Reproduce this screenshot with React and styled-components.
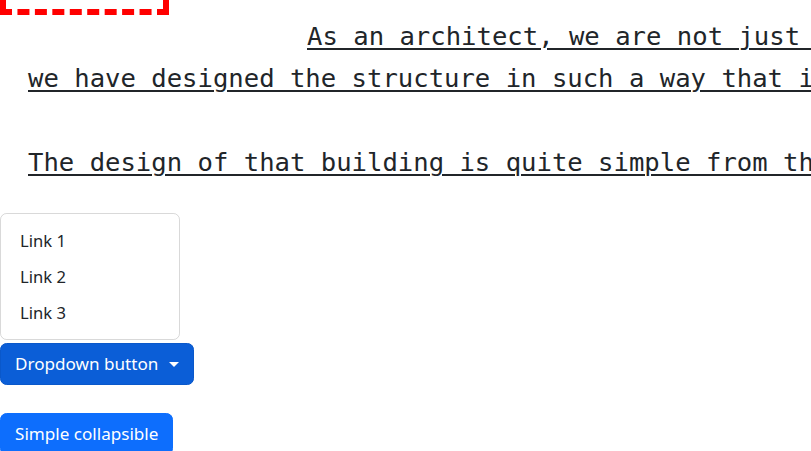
import React from "react";
import styled, { createGlobalStyle } from "styled-components";

const GlobalStyle = createGlobalStyle`
  html, body {
    margin: 0;
    padding: 0;
    background: #fff;
    overflow: hidden;
  }
  body {
    font-family: "Noto Sans", "Open Sans", sans-serif;
    color: #212529;
  }
`;

const Page = styled.div`
  width: 811px;
  height: 451px;
  overflow: hidden;
`;

const DashedBox = styled.div`
  width: 157px;
  height: 9px;
  border: 6px dashed #ff0000;
  border-top: 0;
`;

const Story = styled.p`
  margin: 0 0 30px;
  padding-left: 28px;
  font-family: "DejaVu Sans Mono", "Liberation Mono", monospace;
  font-size: 25.6px;
  line-height: 42px;
  white-space: nowrap;
  text-decoration: underline;
  text-decoration-thickness: 2px;
  text-underline-offset: 3px;
  color: #212529;
`;

const Line = styled.span`
  display: block;
  height: 42px;
  padding-left: ${({ indent }) => (indent ? "279px" : "0")};
`;

const Menu = styled.ul`
  list-style: none;
  margin: 0;
  padding: 9px 0 8px;
  width: 178px;
  border: 1px solid rgba(0, 0, 0, 0.15);
  border-radius: 6.6px;
  box-sizing: content-box;
`;

const MenuItem = styled.li`
  height: 36px;
  line-height: 36px;
  padding: 0 19px;
  font-size: 16.6px;
  color: #212529;
`;

const Button = styled.button`
  display: inline-flex;
  align-items: center;
  height: 42px;
  margin-top: ${({ gap }) => gap}px;
  padding: 0 14px;
  border: 1px solid ${({ dark }) => (dark ? "#0a58ca" : "#0d6efd")};
  border-radius: 6.6px;
  background: ${({ dark }) => (dark ? "#0b5ed7" : "#0d6efd")};
  color: #fff;
  font-family: "Noto Sans", "Open Sans", sans-serif;
  font-size: 17.1px;
  line-height: 26px;
  cursor: pointer;
`;

const Caret = styled.span`
  display: inline-block;
  margin-left: 11px;
  border-top: 5px solid #fff;
  border-left: 5px solid transparent;
  border-right: 5px solid transparent;
`;

const Stack = styled.div`
  display: flex;
  flex-direction: column;
  align-items: flex-start;
`;

export default function App() {
  return (
    <Page>
      <GlobalStyle />
      <DashedBox />
      <Story>
        <Line indent>
          As an architect, we are not just designing buildings, we are shaping spaces
        </Line>
        <Line>
          we have designed the structure in such a way that it stays strong and bright
        </Line>
        <Line />
        <Line>
          The design of that building is quite simple from the outside and the inside
        </Line>
      </Story>
      <Stack>
        <Menu>
          <MenuItem>Link 1</MenuItem>
          <MenuItem>Link 2</MenuItem>
          <MenuItem>Link 3</MenuItem>
        </Menu>
        <Button dark gap={3}>
          Dropdown button
          <Caret />
        </Button>
        <Button gap={28}>Simple collapsible</Button>
      </Stack>
    </Page>
  );
}
